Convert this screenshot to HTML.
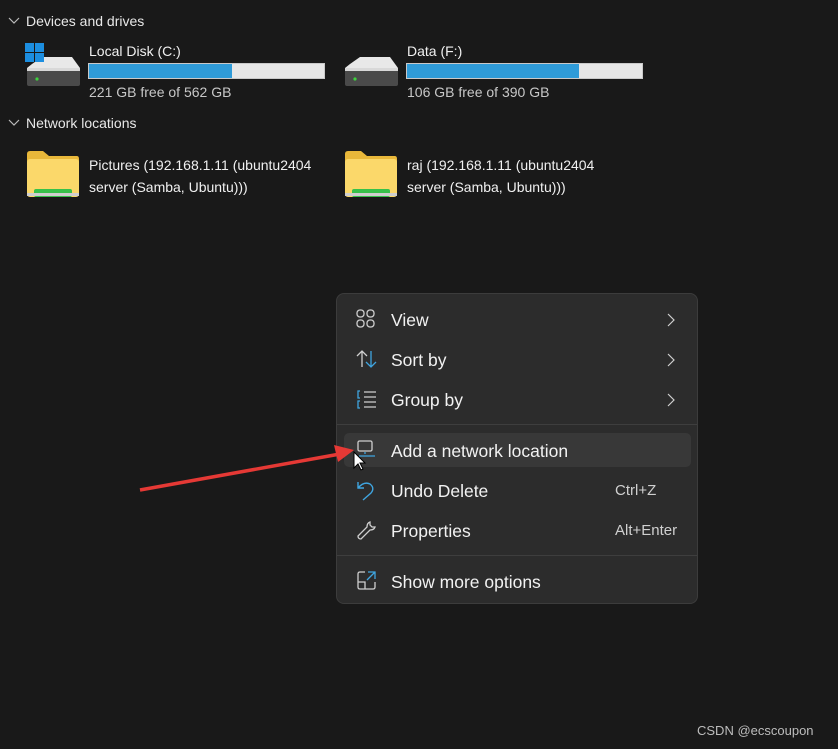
<!DOCTYPE html>
<html><head><meta charset="utf-8"><style>
body{margin:0;width:838px;height:749px;background:#191919;font-family:"Liberation Sans","Segoe UI",sans-serif;color:#fff;position:relative;overflow:hidden}
.a{position:absolute;white-space:nowrap}
.h{font-size:14px;color:#e8e8e8}
.t{font-size:14px;color:#f0f0f0}
.s{font-size:14px;color:#c8c8c8}
.bar{position:absolute;height:16px;background:#e6e6e6;border:1px solid #c9c9c9;box-sizing:border-box}
.bar i{display:block;height:100%;background:#2f9bd8}
.menu{position:absolute;left:336px;top:293px;width:362px;height:311px;background:#2c2c2c;border:1px solid #3c3c3c;border-radius:8px;box-sizing:border-box}
.mi{position:absolute;left:54px;font-size:17.5px;color:#f2f2f2}
.sc{position:absolute;font-size:15px;color:#d0d0d0}
.sep{position:absolute;left:0;width:360px;height:1px;background:#3e3e3e}
.chev{position:absolute;left:330px}
</style></head><body>
<svg class="a" style="left:8px;top:16px" width="12" height="10"><path d="M1 2 L6 7 L11 2" stroke="#bbb" fill="none" stroke-width="1.2"/></svg>
<div class="a h" style="left:26px;top:13px">Devices and drives</div>
<svg class="a" style="left:8px;top:118px" width="12" height="10"><path d="M1 2 L6 7 L11 2" stroke="#bbb" fill="none" stroke-width="1.2"/></svg>
<div class="a h" style="left:26px;top:115px">Network locations</div>

<svg class="a" style="left:24px;top:42px" width="58" height="46">
<path d="M8 22 L18 15 L48 15 L56 26 L3 26 Z" fill="#e8e8e8"/>
<rect x="3" y="26" width="53" height="18" rx="2" fill="#4a4a4a"/><rect x="3" y="26" width="53" height="3" fill="#d8d8d8"/>
<circle cx="13" cy="37" r="1.6" fill="#3ed13e"/>
<rect x="1" y="1" width="9" height="9" fill="#1c8ee0"/><rect x="11" y="1" width="9" height="9" fill="#1c8ee0"/><rect x="1" y="11" width="9" height="9" fill="#1c8ee0"/><rect x="11" y="11" width="9" height="9" fill="#1c8ee0"/></svg>
<div class="a t" style="left:89px;top:43px">Local Disk (C:)</div>
<div class="bar" style="left:88px;top:63px;width:237px"><i style="width:61%"></i></div>
<div class="a s" style="left:89px;top:84px">221 GB free of 562 GB</div>

<svg class="a" style="left:342px;top:42px" width="58" height="46">
<path d="M8 22 L18 15 L48 15 L56 26 L3 26 Z" fill="#e8e8e8"/>
<rect x="3" y="26" width="53" height="18" rx="2" fill="#4a4a4a"/><rect x="3" y="26" width="53" height="3" fill="#d8d8d8"/>
<circle cx="13" cy="37" r="1.6" fill="#3ed13e"/></svg>
<div class="a t" style="left:407px;top:43px">Data (F:)</div>
<div class="bar" style="left:406px;top:63px;width:237px"><i style="width:73%"></i></div>
<div class="a s" style="left:407px;top:84px">106 GB free of 390 GB</div>

<svg class="a" style="left:25px;top:150px" width="56" height="50">
<path d="M2 4 Q2 1 5 1 L18 1 L24 6 L52 6 Q54 6 54 9 L54 14 L2 14 Z" fill="#e9b83a"/>
<rect x="2" y="9" width="52" height="38" rx="3" fill="#fbd86a"/>
<rect x="9" y="39" width="38" height="8" rx="2" fill="#37c14a"/><rect x="2" y="43" width="52" height="3" fill="#cfcfcf"/></svg>
<div class="a t" style="left:89px;top:154px;line-height:22px">Pictures (192.168.1.11 (ubuntu2404<br>server (Samba, Ubuntu)))</div>
<svg class="a" style="left:343px;top:150px" width="56" height="50">
<path d="M2 4 Q2 1 5 1 L18 1 L24 6 L52 6 Q54 6 54 9 L54 14 L2 14 Z" fill="#e9b83a"/>
<rect x="2" y="9" width="52" height="38" rx="3" fill="#fbd86a"/>
<rect x="9" y="39" width="38" height="8" rx="2" fill="#37c14a"/><rect x="2" y="43" width="52" height="3" fill="#cfcfcf"/></svg>
<div class="a t" style="left:407px;top:154px;line-height:22px">raj (192.168.1.11 (ubuntu2404<br>server (Samba, Ubuntu)))</div>

<div class="menu">
<div style="position:absolute;left:7px;top:139px;width:347px;height:34px;background:#383838;border-radius:5px"></div>
<svg class="a" style="left:19px;top:15px" width="20" height="20"><g fill="none" stroke="#cfcfcf" stroke-width="1.3"><rect x="1" y="1" width="7" height="7" rx="3"/><rect x="11" y="1" width="7" height="7" rx="3"/><rect x="1" y="11" width="7" height="7" rx="3"/><rect x="11" y="11" width="7" height="7" rx="3"/></g></svg>
<div class="mi" style="top:16px">View</div><svg class="chev" style="top:19px" width="8" height="14"><path d="M1 1 L7 7 L1 13" stroke="#cfcfcf" fill="none" stroke-width="1.2"/></svg>
<svg class="a" style="left:19px;top:55px" width="22" height="20"><path d="M6 18 V2 M1 7 L6 2 L11 7" stroke="#cfcfcf" fill="none" stroke-width="1.3"/><path d="M15 2 V18 M10 13 L15 18 L20 13" stroke="#3fa5e0" fill="none" stroke-width="1.3"/></svg>
<div class="mi" style="top:56px">Sort by</div><svg class="chev" style="top:59px" width="8" height="14"><path d="M1 1 L7 7 L1 13" stroke="#cfcfcf" fill="none" stroke-width="1.2"/></svg>
<svg class="a" style="left:19px;top:95px" width="22" height="20"><g stroke="#cfcfcf" stroke-width="1.3"><path d="M8 3 H20 M8 8 H20 M8 13 H20 M8 18 H20"/></g><path d="M4 2 H2 V9 H4 M4 12 H2 V19 H4" stroke="#3fa5e0" fill="none" stroke-width="1.3"/></svg>
<div class="mi" style="top:96px">Group by</div><svg class="chev" style="top:99px" width="8" height="14"><path d="M1 1 L7 7 L1 13" stroke="#cfcfcf" fill="none" stroke-width="1.2"/></svg>
<div class="sep" style="top:130px"></div>
<svg class="a" style="left:19px;top:146px" width="22" height="20"><rect x="2" y="1" width="14" height="10" rx="1.5" fill="none" stroke="#cfcfcf" stroke-width="1.3"/><path d="M9 12 V14 M3 16 H19" stroke="#3fa5e0" stroke-width="1.3"/></svg>
<div class="mi" style="top:147px">Add a network location</div>
<svg class="a" style="left:19px;top:186px" width="22" height="22"><path d="M2 2 V8 H8 M2 8 Q8 1 14 4 Q19 8 15 13 L7 20" stroke="#3fa5e0" fill="none" stroke-width="1.4"/></svg>
<div class="mi" style="top:187px">Undo Delete</div><div class="sc" style="left:278px;top:188px">Ctrl+Z</div>
<svg class="a" style="left:19px;top:226px" width="22" height="22"><path d="M14 2 Q11 3 11 7 L2 16 Q2 19 5 19 L14 10 Q18 10 19 7 L16 7 L14 5 Z" stroke="#cfcfcf" fill="none" stroke-width="1.3"/></svg>
<div class="mi" style="top:227px">Properties</div><div class="sc" style="left:278px;top:228px">Alt+Enter</div>
<div class="sep" style="top:261px"></div>
<svg class="a" style="left:19px;top:276px" width="22" height="22"><path d="M9 2 H4 Q2 2 2 4 V17 Q2 19 4 19 H17 Q19 19 19 17 V12 M2 12 H9 V19" stroke="#cfcfcf" fill="none" stroke-width="1.3"/><path d="M12 2 H19 V9 M19 2 L11 10" stroke="#3fa5e0" fill="none" stroke-width="1.3"/></svg>
<div class="mi" style="top:278px">Show more options</div>
</div>

<svg class="a" style="left:0;top:0" width="838" height="749">
<path d="M140 490 L340 454" stroke="#e53935" stroke-width="3.5"/>
<path d="M354 450 L334 445 L338 462 Z" fill="#e53935"/>
<path d="M354 452 L354 468 L358 464 L361 470 L363 469 L360 463 L365 463 Z" fill="#fff" stroke="#000" stroke-width="1"/>
</svg>
<div class="a" style="left:697px;top:723px;font-size:13px;color:#bcbcbc">CSDN @ecscoupon</div>
</body></html>
